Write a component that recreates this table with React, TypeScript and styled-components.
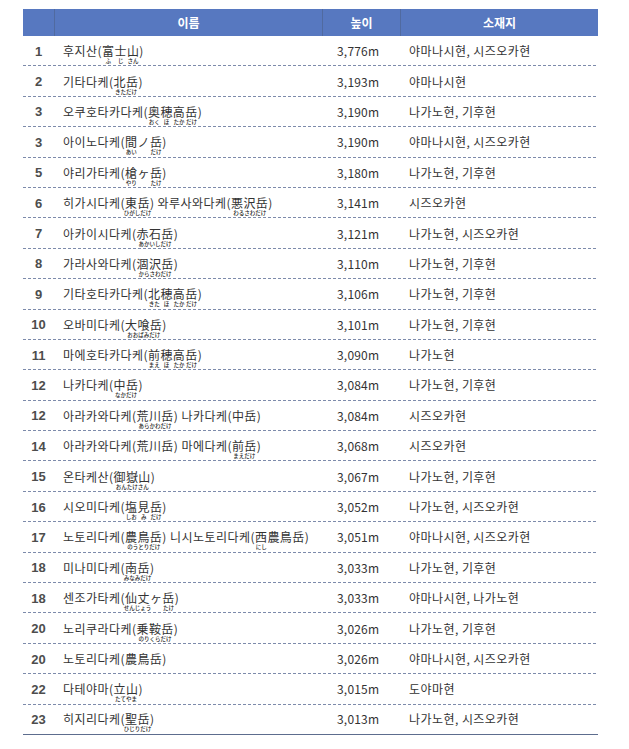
import React from 'react';
import styled, { createGlobalStyle } from 'styled-components';

type Part = string | [string, string?];

interface Peak {
	rank: number;
	name: Part[];
	height: string;
	place: string;
}

const peaks: Peak[] = [
	{ rank: 1, name: ['후지산(', ['富', 'ふ'], ['士', 'じ'], ['山', 'さん'], ')'], height: '3,776m', place: '야마나시현, 시즈오카현' },
	{ rank: 2, name: ['기타다케(', ['北岳', 'きただけ'], ')'], height: '3,193m', place: '야마나시현' },
	{ rank: 3, name: ['오쿠호타카다케(', ['奥', 'おく'], ['穂', 'ほ'], ['高', 'たか'], ['岳', 'だけ'], ')'], height: '3,190m', place: '나가노현, 기후현' },
	{ rank: 3, name: ['아이노다케(', ['間', 'あい'], 'ノ', ['岳', 'だけ'], ')'], height: '3,190m', place: '야마나시현, 시즈오카현' },
	{ rank: 5, name: ['야리가타케(', ['槍', 'やり'], 'ヶ', ['岳', 'たけ'], ')'], height: '3,180m', place: '나가노현, 기후현' },
	{ rank: 6, name: ['히가시다케(', ['東岳', 'ひがしだけ'], ') 와루사와다케(', ['悪沢岳', 'わるさわだけ'], ')'], height: '3,141m', place: '시즈오카현' },
	{ rank: 7, name: ['아카이시다케(', ['赤石岳', 'あかいしだけ'], ')'], height: '3,121m', place: '나가노현, 시즈오카현' },
	{ rank: 8, name: ['가라사와다케(', ['涸沢岳', 'からさわだけ'], ')'], height: '3,110m', place: '나가노현, 기후현' },
	{ rank: 9, name: ['기타호타카다케(', ['北', 'きた'], ['穂', 'ほ'], ['高', 'たか'], ['岳', 'だけ'], ')'], height: '3,106m', place: '나가노현, 기후현' },
	{ rank: 10, name: ['오바미다케(', ['大喰岳', 'おおばみだけ'], ')'], height: '3,101m', place: '나가노현, 기후현' },
	{ rank: 11, name: ['마에호타카다케(', ['前', 'まえ'], ['穂', 'ほ'], ['高', 'たか'], ['岳', 'だけ'], ')'], height: '3,090m', place: '나가노현' },
	{ rank: 12, name: ['나카다케(', ['中岳', 'なかだけ'], ')'], height: '3,084m', place: '나가노현, 기후현' },
	{ rank: 12, name: ['아라카와다케(', ['荒川岳', 'あらかわだけ'], ') 나카다케(中岳)'], height: '3,084m', place: '시즈오카현' },
	{ rank: 14, name: ['아라카와다케(荒川岳) 마에다케(', ['前岳', 'まえだけ'], ')'], height: '3,068m', place: '시즈오카현' },
	{ rank: 15, name: ['온타케산(', ['御嶽山', 'おんたけさん'], ')'], height: '3,067m', place: '나가노현, 기후현' },
	{ rank: 16, name: ['시오미다케(', ['塩', 'しお'], ['見', 'み'], ['岳', 'だけ'], ')'], height: '3,052m', place: '나가노현, 시즈오카현' },
	{ rank: 17, name: ['노토리다케(', ['農鳥岳', 'のうとりだけ'], ') 니시노토리다케(', ['西', 'にし'], '農鳥岳)'], height: '3,051m', place: '야마나시현, 시즈오카현' },
	{ rank: 18, name: ['미나미다케(', ['南岳', 'みなみだけ'], ')'], height: '3,033m', place: '나가노현, 기후현' },
	{ rank: 18, name: ['센조가타케(', ['仙丈', 'せんじょう'], 'ヶ', ['岳', 'たけ'], ')'], height: '3,033m', place: '야마나시현, 나가노현' },
	{ rank: 20, name: ['노리쿠라다케(', ['乗鞍岳', 'のりくらだけ'], ')'], height: '3,026m', place: '나가노현, 기후현' },
	{ rank: 20, name: ['노토리다케(農鳥岳)'], height: '3,026m', place: '야마나시현, 시즈오카현' },
	{ rank: 22, name: ['다테야마(', ['立山', 'たてやま'], ')'], height: '3,015m', place: '도야마현' },
	{ rank: 23, name: ['히지리다케(', ['聖岳', 'ひじりだけ'], ')'], height: '3,013m', place: '나가노현, 시즈오카현' },
];

const GlobalStyle = createGlobalStyle`
	body {
		margin: 0;
		background: #ffffff;
		font-family: "Noto Sans CJK KR", "Noto Sans", sans-serif;
		color: #333333;
	}
`;

const Page = styled.div`
	padding: 9px 0 0 23px;
`;

const Table = styled.div`
	width: 575px;
	display: flex;
	flex-direction: column;
`;

const HeaderRow = styled.div`
	display: grid;
	grid-template-columns: 31px 268px 78px 1fr;
	height: 27px;
	background: #5778c0;
`;

const HeaderCell = styled.div<{ $divider?: boolean }>`
	display: flex;
	align-items: center;
	justify-content: center;
	color: #ffffff;
	font-size: 12px;
	font-weight: 700;
	border-left: 1px solid ${p => (p.$divider ? 'rgba(70, 80, 100, 0.35)' : 'transparent')};
`;

const Row = styled.div<{ $last?: boolean }>`
	display: grid;
	grid-template-columns: 31px 268px 78px 1fr;
	height: 30.4px;
	align-items: center;
	box-sizing: border-box;
	border-bottom: ${p => (p.$last ? '1px solid #5d6d8e' : 'none')};
	background-image: ${p => (p.$last ? 'none' : 'repeating-linear-gradient(90deg, #7d8bab 0 3px, transparent 3px 5px)')};
	background-size: 100% 1px;
	background-position: left bottom;
	background-repeat: no-repeat;
`;

const Rank = styled.div`
	text-align: center;
	font-family: "Liberation Sans", Arial, sans-serif;
	font-weight: 700;
	font-size: 13px;
	color: #4d4d4d;
`;

const Name = styled.div`
	padding-left: 9px;
	font-size: 12px;
	line-height: 1;
	white-space: nowrap;
	letter-spacing: 0.45px;
`;

const Height = styled.div`
	padding-left: 15px;
	font-size: 12px;
	line-height: 1;
	letter-spacing: 0.2px;
`;

const Place = styled.div`
	padding-left: 9px;
	font-size: 12px;
	line-height: 1;
	letter-spacing: 0.45px;
`;

const Base = styled.span`
	position: relative;
	display: inline-block;
	font-family: "Noto Sans CJK JP", "Noto Sans CJK KR", sans-serif;
`;

const Reading = styled.span`
	position: absolute;
	top: 100%;
	left: 50%;
	transform: translateX(-50%);
	margin-top: 2px;
	font-size: 5.5px;
	font-weight: 500;
	line-height: 1;
	letter-spacing: 0;
	white-space: nowrap;
	color: #1f1f1f;
`;

const NameText = ({ parts }: { parts: Part[] }) => (
	<>
		{parts.map((part, i) => {
			if (typeof part === 'string') return <span key={i}>{part}</span>;
			const [base, reading] = part;
			return (
				<Base key={i}>
					{base}
					{reading && <Reading>{reading}</Reading>}
				</Base>
			);
		})}
	</>
);

export default function App() {
	return (
		<Page>
			<GlobalStyle />
			<Table>
				<HeaderRow>
					<HeaderCell />
					<HeaderCell $divider>이름</HeaderCell>
					<HeaderCell $divider>높이</HeaderCell>
					<HeaderCell $divider>소재지</HeaderCell>
				</HeaderRow>
				{peaks.map((peak, i) => (
					<Row key={i} $last={i === peaks.length - 1}>
						<Rank>{peak.rank}</Rank>
						<Name><NameText parts={peak.name} /></Name>
						<Height>{peak.height}</Height>
						<Place>{peak.place}</Place>
					</Row>
				))}
			</Table>
		</Page>
	);
}
